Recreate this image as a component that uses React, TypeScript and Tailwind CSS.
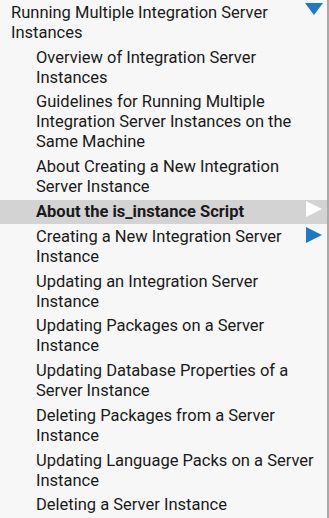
const children: { label: string; active?: boolean; expandable?: boolean }[] = [
  { label: "Overview of Integration Server Instances" },
  { label: "Guidelines for Running Multiple Integration Server Instances on the Same Machine" },
  { label: "About Creating a New Integration Server Instance" },
  { label: "About the is_instance Script", active: true, expandable: true },
  { label: "Creating a New Integration Server Instance", expandable: true },
  { label: "Updating an Integration Server Instance" },
  { label: "Updating Packages on a Server Instance" },
  { label: "Updating Database Properties of a Server Instance" },
  { label: "Deleting Packages from a Server Instance" },
  { label: "Updating Language Packs on a Server Instance" },
  { label: "Deleting a Server Instance" },
];

function Arrow({ dir, color }: { dir: "down" | "right"; color: string }) {
  if (dir === "down") {
    return (
      <svg width="18" height="12" viewBox="0 0 18 12" className="block">
        <polygon points="0,0 18,0 9,12" fill={color} />
      </svg>
    );
  }
  return (
    <svg width="16" height="16" viewBox="0 0 16 16" className="block">
      <polygon points="0,0 16,8 0,16" fill={color} />
    </svg>
  );
}

export default function App() {
  return (
    <div
      className="w-[329px] h-[518px] overflow-hidden bg-[#f7f7f7] border-r-2 border-[#a9a9a9] pt-[0.5px] text-[16.5px] leading-5 text-[#1a1a1a]"
      style={{ fontFamily: "Roboto, 'Liberation Sans', sans-serif" }}
    >
      <ul>
        <li>
          <div className="relative py-[2.4px] pl-[11px] pr-[7px]">
            Running Multiple Integration Server Instances
            <span className="absolute right-[4px] top-[2.5px]">
              <Arrow dir="down" color="#1e78c8" />
            </span>
          </div>
          <ul>
            {children.map((c) => (
              <li
                key={c.label}
                className={
                  "relative py-[2.4px] pl-[36px] pr-[7px] " +
                  (c.active ? "bg-[#d3d3d3] font-bold" : "")
                }
              >
                {c.label}
                {c.expandable && (
                  <span className={"absolute right-[5px] " + (c.active ? "top-[1.5px]" : "top-[2.5px]")}>
                    <Arrow dir="right" color={c.active ? "#ffffff" : "#1e78c8"} />
                  </span>
                )}
              </li>
            ))}
          </ul>
        </li>
      </ul>
    </div>
  );
}
